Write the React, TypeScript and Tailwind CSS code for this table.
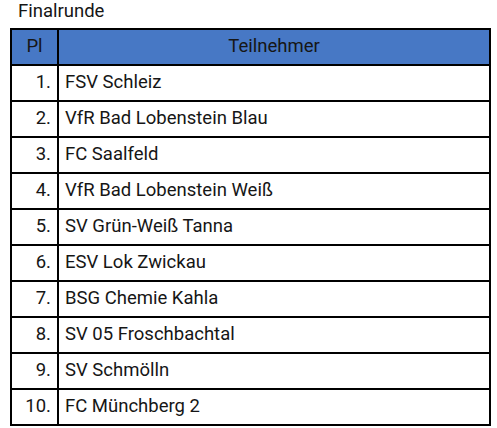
const rows = [
  "FSV Schleiz",
  "VfR Bad Lobenstein Blau",
  "FC Saalfeld",
  "VfR Bad Lobenstein Weiß",
  "SV Grün-Weiß Tanna",
  "ESV Lok Zwickau",
  "BSG Chemie Kahla",
  "SV 05 Froschbachtal",
  "SV Schmölln",
  "FC Münchberg 2",
];

export default function App() {
  return (
    <div className="w-[497px] h-[428px] bg-white text-[#161616]" style={{ fontFamily: "Roboto, sans-serif" }}>
      <div className="h-[28px] pl-[18px] text-[18.5px] leading-[22px]">Finalrunde</div>
      <table className="ml-[10px] w-[481px] border-collapse text-[18.5px]">
        <thead>
          <tr className="h-[36px] bg-[#4778c5]">
            <th className="w-[47px] border-2 border-black font-normal text-center">Pl</th>
            <th className="border-2 border-black font-normal text-center">Teilnehmer</th>
          </tr>
        </thead>
        <tbody>
          {rows.map((name, i) => (
            <tr key={name} className="h-[36px]">
              <td className="border-2 border-black text-right pr-[6px]">{i + 1}.</td>
              <td className="border-2 border-black pl-[6px]">{name}</td>
            </tr>
          ))}
        </tbody>
      </table>
    </div>
  );
}
